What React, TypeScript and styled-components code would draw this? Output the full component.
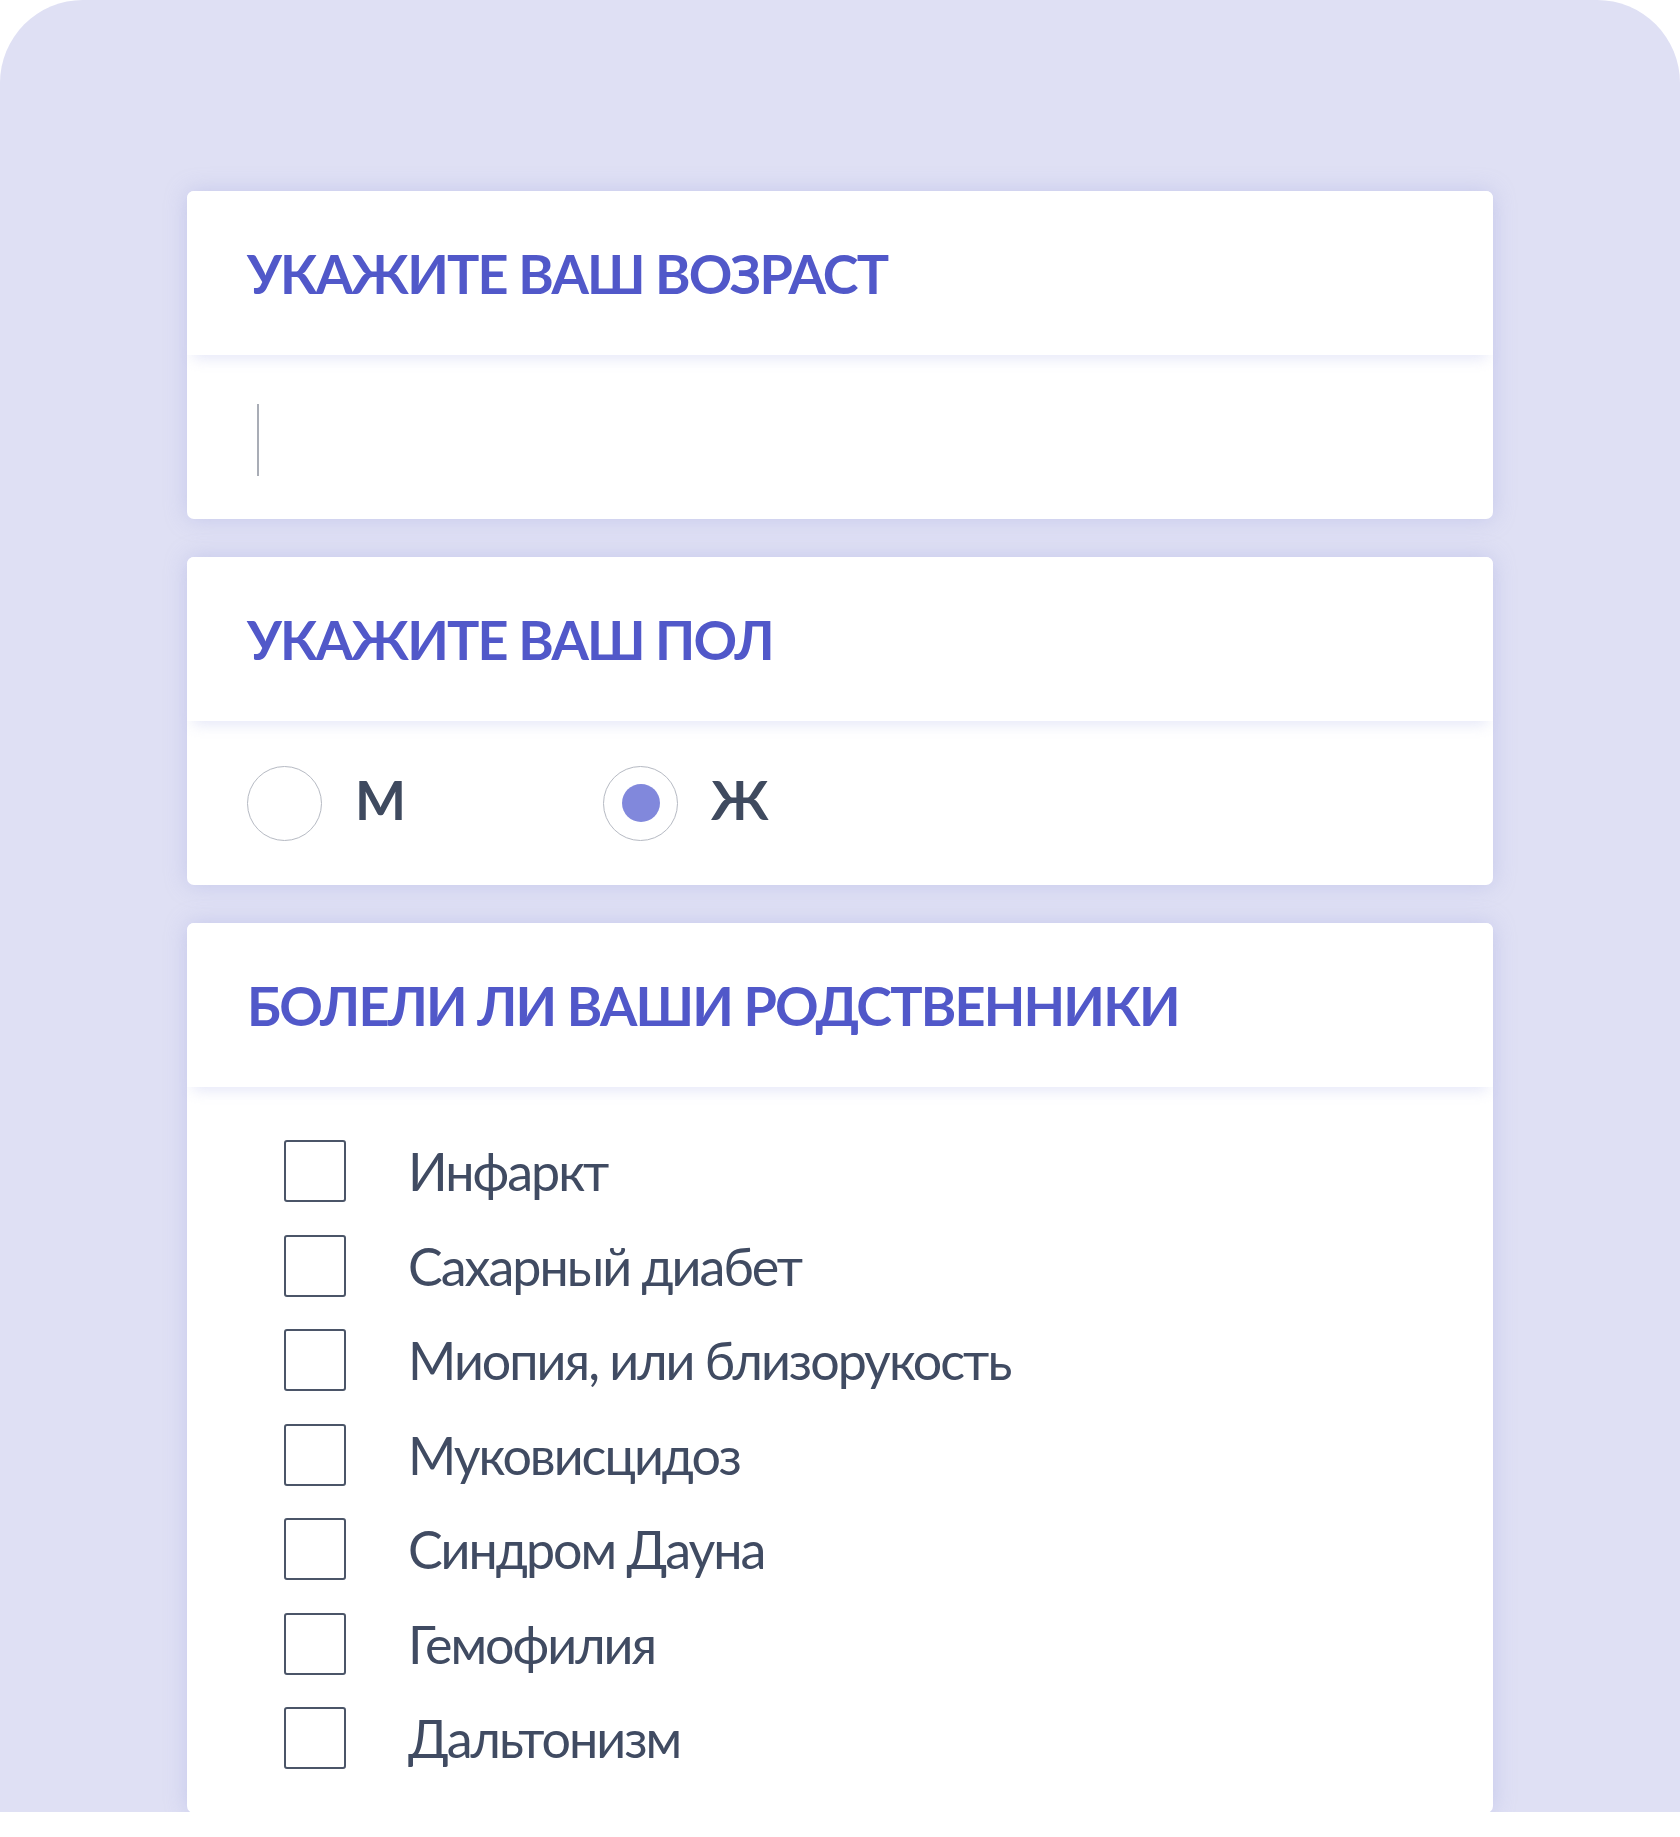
import styled, {createGlobalStyle} from 'styled-components';

const DISEASES = [
   'Инфаркт',
   'Сахарный диабет',
   'Миопия, или близорукость',
   'Муковисцидоз',
   'Синдром Дауна',
   'Гемофилия',
   'Дальтонизм',
];

const GlobalStyle = createGlobalStyle`
   html, body {
      margin: 0;
      padding: 0;
      background: #ffffff;
   }
   * {
      box-sizing: border-box;
   }
`;

const Page = styled.main`
   width: 1680px;
   height: 1812px;
   background: #dfe0f4;
   border-radius: 83px 83px 0 0;
   padding: 191px 0 0 187px;
   display: flex;
   flex-direction: column;
   gap: 38px;
   font-family: Lato, 'Noto Sans', sans-serif;
`;

const Card = styled.section`
   width: 1306px;
   background: #ffffff;
   border-radius: 7px;
   box-shadow: 0 0 22px rgba(150, 154, 220, 0.35);
   display: flex;
   flex-direction: column;
`;

const Header = styled.header`
   position: relative;
   z-index: 1;
   height: 164px;
   display: flex;
   align-items: center;
   padding-left: 60px;
   background: #ffffff;
   border-radius: 7px 7px 0 0;
   box-shadow: 0 10px 14px -6px rgba(200, 203, 240, 0.45);
`;

const Title = styled.h2`
   margin: 0;
   font-size: 54px;
   font-weight: 700;
   letter-spacing: -1.8px;
   color: #5158c9;
   text-transform: uppercase;
`;

const InputArea = styled.div`
   height: 164px;
   display: flex;
   align-items: center;
   padding: 6px 0 0 70px;
`;

const Caret = styled.span`
   display: block;
   width: 2px;
   height: 72px;
   background: #a9adb6;
`;

const RadioRow = styled.div`
   height: 164px;
   display: flex;
   align-items: center;
   padding-left: 60px;
`;

const RadioOption = styled.label`
   width: 356px;
   display: flex;
   align-items: center;
   gap: 33px;
   font-size: 54px;
   font-weight: 700;
   line-height: 1;
   color: #3f4a5f;
`;

const RadioText = styled.span`
   padding-bottom: 6px;
`;

const RadioCircle = styled.span<{$checked?: boolean}>`
   width: 75px;
   height: 75px;
   border-radius: 50%;
   border: 1.5px solid #b6bac3;
   display: flex;
   align-items: center;
   justify-content: center;
   &::after {
      content: '';
      width: 38px;
      height: 38px;
      border-radius: 50%;
      background: ${props => (props.$checked ? '#8188dc' : 'transparent')};
   }
`;

const CheckList = styled.ul`
   list-style: none;
   margin: 0;
   padding: 53px 0 44px 97px;
   display: flex;
   flex-direction: column;
   gap: 32.5px;
`;

const CheckItem = styled.li`
   display: flex;
   align-items: center;
   gap: 62px;
   height: 62px;
   font-size: 52px;
   font-weight: 400;
   letter-spacing: -2px;
   color: #404b62;
`;

const CheckBox = styled.span`
   flex: none;
   width: 62px;
   height: 62px;
   border: 2px solid #4b5568;
   border-radius: 3px;
`;

const App = () => (
   <>
      <GlobalStyle />
      <Page>
         <Card>
            <Header>
               <Title>Укажите ваш возраст</Title>
            </Header>
            <InputArea>
               <Caret />
            </InputArea>
         </Card>
         <Card>
            <Header>
               <Title>Укажите ваш пол</Title>
            </Header>
            <RadioRow>
               <RadioOption>
                  <RadioCircle />
                  <RadioText>М</RadioText>
               </RadioOption>
               <RadioOption>
                  <RadioCircle $checked />
                  <RadioText>Ж</RadioText>
               </RadioOption>
            </RadioRow>
         </Card>
         <Card>
            <Header>
               <Title>Болели ли ваши родственники</Title>
            </Header>
            <CheckList>
               {DISEASES.map(item => (
                  <CheckItem key={item}>
                     <CheckBox />
                     {item}
                  </CheckItem>
               ))}
            </CheckList>
         </Card>
      </Page>
   </>
);

export default App;
